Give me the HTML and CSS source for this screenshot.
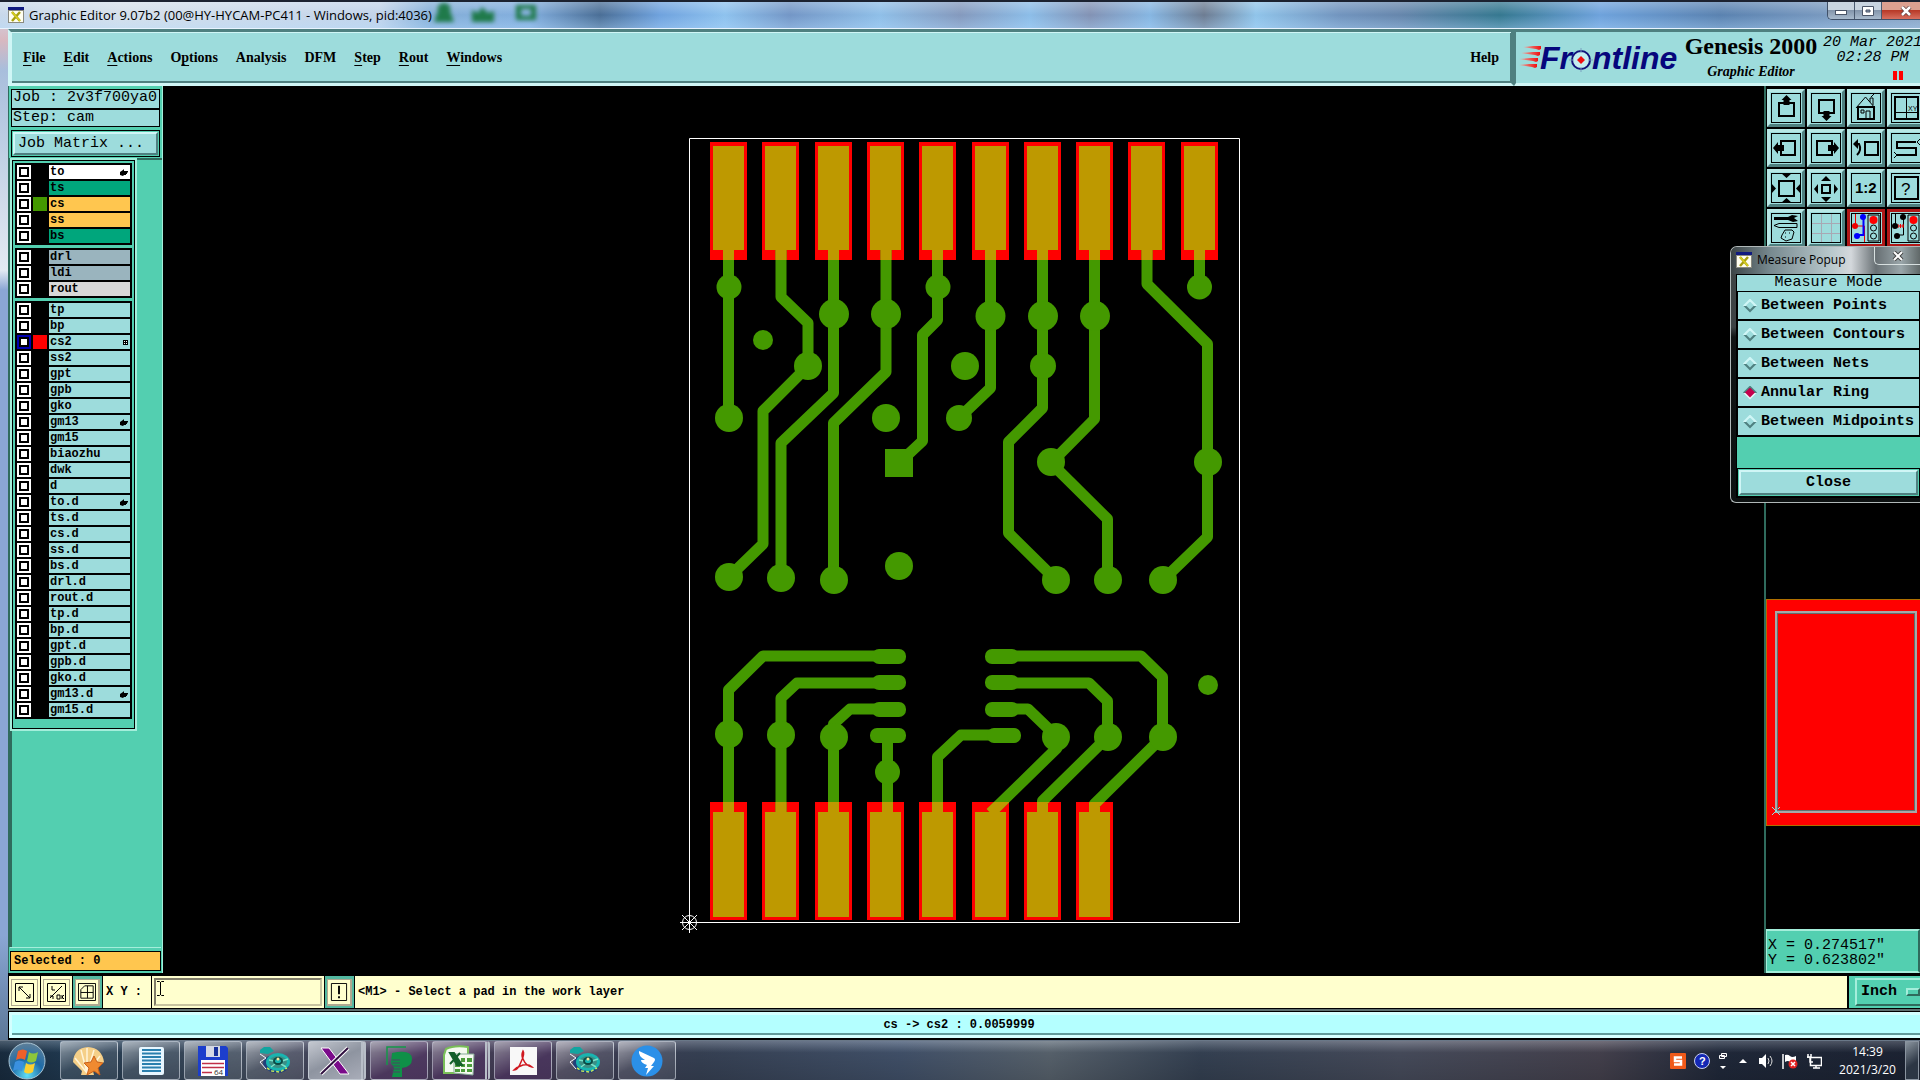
FILE: index.html
```html
<!DOCTYPE html>
<html lang="en">
<head>
<meta charset="utf-8">
<title>Graphic Editor 9.07b2</title>
<link rel="stylesheet" href="styles.css">
</head>
<body>
<svg class="defs" aria-hidden="true">
  <symbol id="xicon" viewBox="0 0 16 16"><rect width="16" height="16" fill="#8a8a80"/><rect x="1" y="4" width="14" height="11" fill="#fffef0"/><rect width="16" height="3" fill="#101a80"/><path d="M4 5l8 9M12 5l-8 9" stroke="#a8a010" stroke-width="2.5"/><path d="M4 5l8 9" stroke="#d8d020" stroke-width="1.5"/></symbol>
  <symbol id="hand" viewBox="0 0 8 7"><path d="M0 3l3-2 1-1v2h4v1.500H7V5H6v1H4L3 7 0 6z"/></symbol>
  <symbol id="reel" viewBox="0 0 32 32"><ellipse cx="17" cy="19" rx="13" ry="9" fill="#223f7a" transform="rotate(8 17 19)"/><ellipse cx="19" cy="17" rx="12" ry="9" fill="#18b5b0"/><ellipse cx="19" cy="17" rx="9" ry="6" fill="#3b8f86"/><path d="M10 15l5 1M12 22l4-3M27 22l-5-3M29 14l-6 2" stroke="#7be0c8" stroke-width="1.500"/><ellipse cx="19" cy="16" rx="5" ry="4" fill="#0b4a44"/><ellipse cx="19" cy="16" rx="3" ry="2" fill="#18b5b0"/><circle cx="19" cy="14" r="1.500" fill="#ffe9a0"/><path d="M1 5l4-3h6l4 4-6 3-8-1z" fill="#12a5a0"/><path d="M1 9l6 4-6 4 6 7" stroke="#f4f8ff" fill="none"/><path d="M8 23l5 3 8 1 7-4" stroke="#c4e85a" stroke-width="1.500" stroke-dasharray="3 2" fill="none"/></symbol>
</svg>

<div class="window">
  <header class="titlebar">
    <svg class="app-icon"><use href="#xicon"/></svg>
    <h1 class="window-title">Graphic Editor 9.07b2 (00@HY-HYCAM-PC411 - Windows, pid:4036)</h1>
    <svg class="ghost" viewBox="0 0 110 26" aria-hidden="true"><g fill="#1f7a4a"><path d="M12 1a6 6 0 016 8l4 11H2l4-11a6 6 0 016-8z"/><path d="M40 20V8l6 3 4-6 6 6 6-2v11z"/><path d="M84 3h20v15H84zM89 7v7h10V7z" fill-rule="evenodd"/></g></svg>
    <div class="caption-buttons">
      <button class="cap" aria-label="Minimize"><svg viewBox="0 0 12 10"><rect x="0.500" y="4.500" width="11" height="4" fill="#fff" stroke="#4a5568"/></svg></button>
      <button class="cap" aria-label="Maximize"><svg viewBox="0 0 12 10"><path d="M.5.5h11v9H.5zM4 4v2h4V4z" fill="#fff" stroke="#4a5568" fill-rule="evenodd"/></svg></button>
      <button class="cap cap-close" aria-label="Close window"><svg viewBox="0 0 12 10"><path d="M2 1l8 8M10 1L2 9" stroke="#5c3a3a" stroke-width="4"/><path d="M2 1l8 8M10 1L2 9" stroke="#fff" stroke-width="2.500"/></svg></button>
    </div>
  </header>

  <div class="topbar">
    <nav class="menubar">
      <button><u>F</u>ile</button><button><u>E</u>dit</button><button><u>A</u>ctions</button><button>O<u>p</u>tions</button><button>Analysis</button><button>DFM</button><button><u>S</u>tep</button><button><u>R</u>out</button><button><u>W</u>indows</button>
      <button class="help">Help</button>
    </nav>
    <div class="brand">
      <svg class="logo" viewBox="0 0 164 40" role="img" aria-label="Frontline">
        <defs><linearGradient id="sp"><stop offset="0" stop-color="#e8b0a8"/><stop offset="1" stop-color="#f01010"/></linearGradient></defs>
        <g fill="url(#sp)"><path d="M4 9l10-1h8v3l-2 1-3-1z"/><path d="M2 15l12-1h7v3l-2 1-3-1z"/><path d="M0 21l12-1h7v3l-2 1-3-1z"/><path d="M0 27l10-1h8v3l-2 1-3-1z"/></g>
        <text class="logo-text" x="21" y="31">Fr</text>
        <circle cx="62" cy="22" r="9" fill="#c4eef0" stroke="#12127a" stroke-width="2"/><path d="M62 18l4 4-4 4-4-4z" fill="#f01010"/><path d="M62 10v5M62 29v5M50 22h5M69 22h5" stroke="#7b9fc0"/>
        <text class="logo-text" x="73" y="31">ntline</text>
      </svg>
      <div class="product"><strong>Genesis 2000</strong><em>Graphic Editor</em></div>
      <div class="clock"><span>20 Mar 2021</span><span>02:28 PM</span><i class="pause"></i></div>
    </div>
  </div>

  <main class="workspace">
    <aside class="sidebar">
      <div class="job">
        <div>Job : 2v3f700ya0</div>
        <div>Step: cam</div>
      </div>
      <div class="matrix"><button>Job Matrix ...</button></div>
      <div class="layers">
        <div class="layer-frame" id="layers"></div>
      </div>
      <div class="selected"><span>Selected : 0</span></div>
    </aside>

    <section class="canvas">
      <svg viewBox="163 86 1601 889" role="img" aria-label="Board artwork">
        <defs>
          <g id="copper">
            <g class="trace">
              <path d="M728.500 250V418"/>
              <path d="M781 250V297L808 323V366L763 411V544L729 577"/>
              <path d="M833.500 250V393L781 443V578"/>
              <path d="M886 250V372L833.500 423V580"/>
              <path d="M937.500 250V320L922.500 335V441L899 463"/>
              <path d="M990.500 250V388L959 418"/>
              <path d="M1042.500 250V408L1008.500 442V533L1056 580"/>
              <path d="M1094.500 250V419L1051 463L1107.500 519V580"/>
              <path d="M1147 250V284L1207.500 344V537L1163 580"/>
              <path d="M1199.500 250V287"/>
              <path d="M728.500 812V690L763 656H880"/>
              <path d="M781 812V698L797 683H880"/>
              <path d="M833.500 812V724L850 709H880"/>
              <path d="M887.500 812V735"/>
              <path d="M937.500 812V757L961 735H995"/>
              <path d="M1010 709H1028L1057 737V748L990.500 813"/>
              <path d="M1010 683H1089L1107.500 701V737L1042.500 801V813"/>
              <path d="M1010 656H1141L1162.500 677V737L1094.500 804V813"/>
            </g>
            <circle cx="729" cy="287" r="12.500"/><circle cx="729" cy="418" r="14"/><circle cx="763" cy="340" r="10"/><circle cx="808" cy="366" r="14"/><circle cx="729" cy="577" r="14"/><circle cx="781" cy="578" r="14"/><circle cx="834" cy="314" r="15"/><circle cx="834" cy="580" r="14"/><circle cx="886" cy="314" r="15"/><circle cx="886" cy="418" r="14"/><circle cx="938" cy="287" r="12.500"/><circle cx="965" cy="366" r="14"/><circle cx="959" cy="418" r="13"/><circle cx="990.500" cy="316" r="15"/><circle cx="1043" cy="316" r="15"/><circle cx="1043" cy="366" r="13"/><circle cx="1095" cy="316" r="15"/><circle cx="1051" cy="462" r="14"/><circle cx="1056" cy="580" r="14"/><circle cx="1108" cy="580" r="14"/><circle cx="1163" cy="580" r="14"/><circle cx="1208" cy="462" r="14"/><circle cx="1199.500" cy="287" r="12.500"/><circle cx="899" cy="566" r="14"/><circle cx="1208" cy="685" r="10"/>
            <circle cx="729" cy="734" r="14"/><circle cx="781" cy="735" r="14"/><circle cx="834" cy="737" r="14"/><circle cx="887.500" cy="772" r="12.500"/><circle cx="1056" cy="737" r="14"/><circle cx="1108" cy="737" r="14"/><circle cx="1163" cy="737" r="14"/>
            <rect x="885" y="449" width="28" height="28"/>
            <g id="pills"></g>
          </g>
          <clipPath id="padclip"></clipPath>
        </defs>
        <path d="M689.500 138.500H1239.500V922.500H689.500z" fill="none" stroke="#fff"/>
        <g id="pads" fill="#ff0000"></g>
        <use href="#copper" fill="#449900" stroke="#449900"/>
        <g clip-path="url(#padclip)"><use href="#copper" fill="#be9900" stroke="#be9900"/></g>
        <g id="fingers" fill="#be9900"></g>
        <path d="M680 922.500H700M689.500 912V933M682 915l15 15M697 915l-15 15" stroke="#fff"/><circle cx="689.500" cy="922.500" r="7" fill="none" stroke="#fff"/>
      </svg>
    </section>

    <aside class="tools">
      <div class="toolgrid">
        <button class="tool" aria-label="Pan up"><svg viewBox="0 0 30 30"><path class="s2" d="M8 10h15v13H8z"/><path d="M15.500 2l5 5h-2v5h-6V7h-2z"/></svg></button>
        <button class="tool" aria-label="Pan down"><svg viewBox="0 0 30 30"><path class="s2" d="M8 7h15v13H8z"/><path d="M15.500 28l5-5h-2v-5h-6v5h-2z"/></svg></button>
        <button class="tool" aria-label="Home"><svg viewBox="0 0 30 30"><path class="s1" d="M5 15L14.500 4 24 15M19 9V5h3v7M20 4l3-3M10 17h3v3h-3zM15 26v-8h4v8z"/><path class="s2" d="M7 14v12h16V14z"/></svg></button>
        <button class="tool" aria-label="Zoom to XY"><svg viewBox="0 0 30 30"><path class="s2" d="M4 4h23v22H4z"/><path class="s1" d="M15.500 4v22M4 19.500h23"/><text x="17" y="18" font-size="7">XY</text></svg></button>
        <button class="tool" aria-label="Pan left"><svg viewBox="0 0 30 30"><path class="s2" d="M10 8h14v14H10z"/><path d="M2 15l5-6v3h6v6H7v3z"/></svg></button>
        <button class="tool" aria-label="Pan right"><svg viewBox="0 0 30 30"><path class="s2" d="M6 8h15v14H6z"/><path d="M28 15l-5-6v3h-6v6h6v3z"/></svg></button>
        <button class="tool" aria-label="Previous view"><svg viewBox="0 0 30 30"><path class="s2" d="M14 9h13v13H14zM4 11h4q3 6-2 11"/><path d="M2 11l5-5v10z"/></svg></button>
        <button class="tool" aria-label="Snake"><svg viewBox="0 0 30 30"><path class="s2" d="M25 9H6v6h19v7H6"/><path class="s1" d="M29 6l-3 3 3 3M3 19l3 3-3 3"/></svg></button>
        <button class="tool" aria-label="Zoom in"><svg viewBox="0 0 30 30"><path class="s2" d="M8 8h15v15H8z"/><path d="M10 0h11l-5.500 5zM10 30h11l-5.500-5zM0 10v11l5-5.500zM30 10v11l-5-5.500z"/></svg></button>
        <button class="tool" aria-label="Zoom out"><svg viewBox="0 0 30 30"><path class="s2" d="M11 12h8v8h-8z"/><path d="M10 8h10l-5-5zM10 24h10l-5 5zM7 11v10l-4-5zM23 11v10l4-5z"/></svg></button>
        <button class="tool" aria-label="Scale 1:2"><svg viewBox="0 0 30 30"><text x="4" y="20" font-size="15" font-weight="bold">1:2</text></svg></button>
        <button class="tool" aria-label="Query"><svg viewBox="0 0 30 30"><path class="s2" d="M4 4h23v22H4z"/><text x="10" y="22" font-size="17">?</text></svg></button>
        <button class="tool" aria-label="Settings"><svg viewBox="0 0 30 30"><path d="M3 4h14v3H3zM17 4l4-2 6 1-4 2 4 3-5 1-5-2z"/><path class="s1" d="M3 12.500l5-2h18v4H8zM11 22l3-5h7l2 2-2 7-6 2-5-3zM14 20h1M18 20h1M14 24h1"/></svg></button>
        <button class="tool" aria-label="Grid"><svg viewBox="0 0 30 30"><path d="M10.500 0v30M20.500 0v30M0 10.500h30M0 20.500h30" stroke="#a8a8b4"/></svg></button>
        <button class="tool tool-red" aria-label="Snap to nets"><svg viewBox="0 0 30 30"><path d="M4.500 0v13h9v17" stroke="#e00" fill="none"/><path d="M12.500 4v18H7" stroke="#00f" stroke-width="2" fill="none"/><circle cx="4" cy="13" r="3" fill="#e00"/><circle cx="12" cy="4" r="3" fill="#00f"/><circle cx="6" cy="23" r="3" fill="#00f"/><path class="s1" d="M17 2h11v26H17z"/><circle cx="22.500" cy="7" r="4" fill="#f00"/><circle class="s1" cx="22.500" cy="15" r="3"/><circle class="s1" cx="22.500" cy="23" r="3"/></svg></button>
        <button class="tool tool-red" aria-label="Snap to features"><svg viewBox="0 0 30 30"><path class="s1" d="M4.500 0v13M12.500 4v18H7"/><path d="M7 11v4M9.500 11v4M7 13h6M12 11v4" stroke="#e00"/><circle cx="4" cy="13" r="3"/><circle cx="12" cy="4" r="3"/><circle cx="6" cy="23" r="3"/><path class="s1" d="M17 2h11v26H17z"/><circle cx="22.500" cy="7" r="4" fill="#f00"/><circle class="s1" cx="22.500" cy="15" r="3"/><circle class="s1" cx="22.500" cy="23" r="3"/></svg></button>
      </div>
      <div class="overview"><div class="overview-frame"><svg viewBox="0 0 8 8"><path d="M0 0l8 8M8 0L0 8" stroke="#8fe0e0"/></svg></div></div>
      <div class="coords"><div>X = 0.274517"</div><div>Y = 0.623802"</div></div>
    </aside>
  </main>

  <div class="command">
    <button class="cbtn" aria-label="Measure"><svg viewBox="0 0 19 19"><path d="M.5.5h18v18H.5zM4 4l11 11M4 8V4h4M15 11v4h-4"/></svg></button>
    <button class="cbtn" aria-label="Snap mode"><svg viewBox="0 0 19 19"><path d="M.5.5h18v18H.5zM3 15L15 3M5 3v4h3M3 13h3v3M10 12h3v4h-3zM15 12v4M17 12l-2 2 2 2"/></svg></button>
    <button class="cbtn on" aria-label="Grid mode"><svg viewBox="0 0 19 19"><path d="M.5.5h18v18H.5zM7 3h9v13H3V7zM10 3v13M3 10h13"/></svg></button>
    <label for="xy">X Y :</label>
    <div class="xy-box"><input id="xy" type="text"><svg class="ibeam" viewBox="0 0 7 15"><path d="M0 .5h2.500l1 1 1-1H7M0 14.500h2.500l1-1 1 1H7M3.500 1v13" fill="none" stroke="#000"/></svg></div>
    <button class="cbtn on bang" aria-label="Alert"><svg viewBox="0 0 19 19"><path d="M1.500.5h16v18h-16z"/><path class="s2" d="M9.500 3v9M9.500 14v2"/></svg></button>
    <output class="message">&lt;M1&gt; - Select a pad in the work layer</output>
    <div class="units"><select aria-label="Units"><option>Inch</option></select><i></i></div>
  </div>
  <div class="status"><div>cs -&gt; cs2 : 0.0059999</div></div>

  <section class="popup" aria-label="Measure Popup">
    <div class="popup-title"><svg class="app-icon"><use href="#xicon"/></svg><h2>Measure Popup</h2><button aria-label="Close popup"><svg viewBox="0 0 12 10"><path d="M2 1l8 8M10 1L2 9" stroke="#444" stroke-width="4"/><path d="M2 1l8 8M10 1L2 9" stroke="#fff" stroke-width="2"/></svg></button></div>
    <div class="popup-body">
      <h3>Measure Mode</h3>
      <label><input type="radio" name="mode">Between Points</label>
      <label><input type="radio" name="mode">Between Contours</label>
      <label><input type="radio" name="mode">Between Nets</label>
      <label><input type="radio" name="mode" checked>Annular Ring</label>
      <label><input type="radio" name="mode">Between Midpoints</label>
      <div class="popup-foot"><button>Close</button></div>
    </div>
  </section>
</div>

<footer class="taskbar">
  <button class="start" aria-label="Start"><svg viewBox="0 0 38 38"><defs><radialGradient id="orb" cx=".5" cy=".9" r=".9"><stop offset="0" stop-color="#5fe0f8"/><stop offset=".5" stop-color="#1d6ba8"/><stop offset="1" stop-color="#5f7f98"/></radialGradient></defs><circle cx="19" cy="19" r="18" fill="url(#orb)" stroke="#a8c4d4"/><path d="M10 9q5-3 9 0l-2 9q-4-3-9 0z" fill="#f0602a"/><path d="M21 10q4 3 9 0l-2 9q-5 3-9 0z" fill="#8ec63a"/><path d="M7 20q4-3 9 0l-2 9q-5-3-9 0z" fill="#3a90e0"/><path d="M18 21q4 3 9 0l-2 9q-5 3-9 0z" fill="#fcd030"/></svg></button>
  <div class="tasks">
    <button class="task" aria-label="Shell"><svg viewBox="0 0 32 32"><path d="M15 2Q1 3 0 17l9 9-1 4h13l-1-4 11-9Q29 3 15 2z" fill="#f5cf88"/><path d="M14 28L2 13M14 28L8 5M14 28V3M14 28l7-23M14 28l13-17" stroke="#fff4d8" stroke-width="1.500"/><path d="M21 11l3 6 6 1-5 5 2 7-6-4-7 4 2-7-5-5 7-1z" fill="#f08a30" stroke="#c8601a"/></svg></button>
    <button class="task" aria-label="Notes"><svg viewBox="0 0 32 32"><rect x="4" y="2" width="25" height="28" rx="2" fill="#e8f6ff"/><path d="M7 5h19M7 8.500h19M7 12h19M7 15.500h19M7 19h19M7 22.500h19M7 26h19" stroke="#2a7fae" stroke-width="2"/></svg></button>
    <button class="task" aria-label="Total Commander"><svg viewBox="0 0 32 32"><path d="M1 1h28l2 2v28H1z" fill="#1c3ecc"/><rect x="9" y="1" width="14" height="11" fill="#d4d8e4"/><rect x="17" y="2" width="4" height="9" fill="#16309a"/><rect x="4" y="15" width="24" height="16" fill="#fff"/><path d="M5 18.500h22M5 22.500h22M5 27.500h10" stroke="#c03048" stroke-width="1.500"/><text x="17" y="30" font-size="8" fill="#333">64</text></svg></button>
    <button class="task" aria-label="Reel"><svg><use href="#reel"/></svg></button>
    <button class="task active stack" aria-label="Exceed"><svg viewBox="0 0 32 32"><path d="M2 3h8l20 26h-9z" fill="#7a0a8a" stroke="#fff"/><path d="M29 3L2 29" stroke="#fff" stroke-width="4"/><path d="M29 3L2 29" stroke="#301040" stroke-width="2"/></svg></button>
    <button class="task tint" aria-label="P"><svg viewBox="0 0 32 32"><path d="M4 20V2h19" stroke="#14984a" fill="none" stroke-width="1.500"/><path d="M9 8q20-4 20 6 0 8-10 9v9H9l2-9-3-5z" fill="#0f9048"/><path d="M9 15h8M9 18h8M9 21h8M9 24h8M9 27h8" stroke="#4d4565"/></svg></button>
    <button class="task tint stack" aria-label="Excel"><svg viewBox="0 0 32 32"><path d="M3 4q8-4 22-2v26H1V10z" fill="#f4faf0" stroke="#7abf58" stroke-width="2"/><path d="M11 9h20l-1 21-19-2z" fill="#f4faf0" stroke="#8a9"/><path d="M18 13h4v4h-4zM24 13h5v4h-5zM12 19h5v3h-5zM18 19h4v3h-4zM24 19h5v3h-5zM12 24h5v3h-5zM18 24h4v3h-4zM24 24h5v3h-5z" fill="#4b9b3a"/><path d="M7 8h4l8 12h-5zM17 8L7 19" stroke="#14602a" stroke-width="2" fill="#14602a"/></svg></button>
    <button class="task tint" aria-label="PDF"><svg viewBox="0 0 32 32"><rect x="3" y="2" width="27" height="28" fill="#f8f8f8"/><path d="M16 6q-2 4 0 8 3 7 9 8-3-3-9-2-6 2-9 5 4 0 7-8 4-8 2-11z" stroke="#d01820" fill="none" stroke-width="1.500"/></svg></button>
    <button class="task" aria-label="Reel 2"><svg><use href="#reel"/></svg></button>
    <button class="task" aria-label="DingTalk"><svg viewBox="0 0 32 32"><circle cx="16" cy="16" r="15.500" fill="#2b90e8"/><path d="M8 6l15 7q2 1 0 4l-3 4h3l-8 9 2-7h-3l2-3q-6-2-6-5l4 0q-7-4-6-9z" fill="#fff"/></svg></button>
  </div>
  <div class="tray">
    <svg class="big" viewBox="0 0 16 16"><rect width="16" height="16" rx="1" fill="#f05a1a"/><path d="M12 4.500H5v3.500h6v3.500H4" stroke="#fff" stroke-width="2.500" fill="none"/></svg>
    <svg class="big" viewBox="0 0 16 16"><circle cx="8" cy="8" r="7.500" fill="#1428b4" stroke="#c8d0f0"/><text x="5" y="12" font-size="11" font-weight="bold" fill="#fff">?</text></svg>
    <svg class="tall" viewBox="0 0 10 18"><path d="M3.500 1.500h5v3h-5zM1.500 3.500h5v3h-5z" fill="#334" stroke="#fff"/><path d="M2 14h6l-3 3z" fill="#fff"/></svg>
    <svg viewBox="0 0 14 14"><path d="M3 9h8L7 5z" fill="#fff"/></svg>
    <svg class="big" viewBox="0 0 16 16"><path d="M1 5h3l4-4v14l-4-4H1z" fill="#fff"/><path d="M10 5q2 3 0 6M12 3q4 5 0 10" stroke="#ddd" fill="none"/></svg>
    <svg class="big" viewBox="0 0 16 16"><path d="M1 1v15" stroke="#fff" stroke-width="1.500"/><path d="M3 2q3-1 5 1t6 0v6q-4 2-6 0T3 9z" fill="#fff"/><circle cx="11" cy="11" r="4.500" fill="#e02020"/><path d="M9 9l4 4M13 9l-4 4" stroke="#fff" stroke-width="1.500"/></svg>
    <svg class="big" viewBox="0 0 16 16"><path d="M4.500 4.500h11v8h-11zM7 15h7M10 12v3M2 1v4M5 1v3M1 4h3v5h3" stroke="#fff" fill="none" stroke-width="1.500"/></svg>
    <time><span>14:39</span><span>2021/3/20</span></time>
  </div>
  <button class="desk" aria-label="Show desktop"></button>
</footer>
<script src="app.js"></script>
</body>
</html>
```
FILE: styles.css
```css
:root {
  --face: #9ddcdc;
  --hi: #d0f6f6;
  --lo: #4f8080;
  --teal: #53cfb0;
  --teal-hi: #a4eedb;
  --teal-lo: #2f6b5d;
  --cream: #ffffce;
  --mono: "Liberation Mono", "DejaVu Sans Mono", monospace;
  --serif: "Liberation Serif", serif;
  --ui: "Open Sans", "Noto Sans", sans-serif;
}
* { box-sizing: border-box; }
body { margin: 0; height: 100vh; display: flex; flex-direction: column; overflow: hidden; background: #000; color: #000; font-family: var(--mono); }
button, input, select { font: inherit; color: inherit; margin: 0; border-radius: 0; }
button { padding: 0; border: 0; background: none; }
h1, h2, h3 { margin: 0; font-weight: normal; }
svg { display: block; }
.defs { position: absolute; width: 0; height: 0; }

.window { flex: 1; min-height: 0; display: flex; flex-direction: column; padding-left: 8px; position: relative; background: linear-gradient(#cddff2 0, #d8b8c0 40px, #a8bedc 70px, #e4eaf2 270px, #8aa6d4 290px, #8aa6d4 90%, #5c7898); }

/* title bar */
.titlebar { height: 29px; flex: none; margin-left: -8px; padding: 0 0 0 8px; display: flex; align-items: center; border-top: 2px solid #1c2230; border-bottom: 1px solid #e8f4ff;
  background: linear-gradient(rgba(255,255,255,.25), rgba(255,255,255,0) 50%, rgba(180,220,255,.35)),
  linear-gradient(90deg, #c8d8ea 0, #d6e0ea 120px, #c2d4ea 380px, #85afd8 430px, #82aede 530px, #4a6e96 600px, #6fa2de 660px, #8ec2ee 725px, #7396c6 790px, #8fbfe8 880px, #8499bd 960px, #8cbde8 1030px, #8292b4 1090px, #86b6e2 1150px, #6d7c92 1204px, #90c4ea 1256px, #7194be 1340px, #6686ac 1400px, #357890 1500px, #6ea2dc 1600px, #5a82b0 1720px, #7a9ac0 1830px, #8aa4c4); }
.app-icon { width: 16px; height: 16px; flex: none; }
.window-title { margin-left: 5px; font: 13px/20px var(--ui); white-space: nowrap; }
.ghost { width: 110px; height: 26px; filter: blur(2px); }
.caption-buttons { display: flex; flex: none; align-self: flex-start; margin-left: auto; border: 1px solid #3f5068; border-width: 0 0 1px 1px; border-radius: 0 0 0 5px; margin-right: -10px; overflow: hidden; }
.cap { width: 27px; height: 17px; display: grid; place-items: center; border-right: 1px solid #4a5a70; background: linear-gradient(#c8d4e0 45%, #8496ac 50%, #a8bacd); }
.cap svg { width: 12px; height: 10px; }
.cap-close { width: 48px; border: 0; background: linear-gradient(#dca090 45%, #b83a28 50%, #d87060); }

/* menu and brand */
.topbar { display: flex; flex: none; height: 57px; background: var(--teal-hi); }
.menubar { flex: 1; display: flex; align-items: center; gap: 18px; padding: 0 12px; background: var(--face); border: 3px solid; border-color: var(--lo) var(--lo) var(--hi) var(--hi); box-shadow: inset 1px 1px var(--hi), inset -1px -2px var(--lo); font: bold 14px/20px var(--serif); }
.menubar button { white-space: nowrap; }
.menubar u { text-underline-offset: 3px; }
.menubar .help { margin-left: auto; }
.brand { width: 406px; flex: none; display: flex; overflow: hidden; background: var(--face); border: solid; border-width: 3px 0 3px 2px; border-color: var(--lo) var(--lo) var(--hi) var(--lo); }
.logo { width: 164px; height: 40px; margin: 6px 0 0 3px; flex: none; }
.logo-text { font: italic bold 32px "Liberation Sans", sans-serif; fill: #06067c; }
.product { display: flex; flex-direction: column; align-items: center; flex: none; width: 136px; font-family: var(--serif); white-space: nowrap; }
.product strong { font-size: 24px; line-height: 28px; }
.product em { font-size: 14px; line-height: 24px; font-weight: bold; }
.clock { display: flex; flex-direction: column; flex: none; align-items: center; padding-left: 4px; padding-top: 3px; font: italic bold 15px/15px var(--mono); font-weight: normal; white-space: nowrap; }
.pause { width: 10px; height: 9px; margin: 6px 0 0 50px; border: solid red; border-width: 0 4px; }

/* workspace */
.workspace { flex: 1; min-height: 0; display: flex; background: #000; }
.sidebar { width: 155px; flex: none; display: flex; flex-direction: column; margin-bottom: 2px; background: var(--teal); border-right: 1px solid var(--teal-hi); border-left: 1px solid var(--teal-lo); font-size: 15px; white-space: nowrap; }
.job { margin: 3px 2px; border: 1px solid #000; background: var(--face); }
.job div { height: 18px; line-height: 16px; padding-left: 1px; }
.job div + div { border-top: 2px solid #000; }
.matrix { margin: 0 2px 1px; padding: 1px; border: 1px solid #000; }
.matrix button { display: block; width: 100%; height: 23px; text-align: left; padding-left: 3px; background: var(--face); border: 2px solid; border-color: var(--hi) var(--lo) var(--lo) var(--hi); }
.layers { flex: 1; border-top: 2px solid var(--teal-lo); border-left: 3px solid var(--teal-lo); min-height: 0; }
.layer-frame { width: 123px; padding: 2px 2px 9px; display: flex; flex-direction: column; gap: 3px; border: 1px solid #000; outline: 2px solid var(--teal-hi); outline-offset: 0; }
.layer-group { background: #000; padding: 2px 2px 0; }
.layer { display: flex; gap: 2px; height: 14px; margin-bottom: 2px; font: bold 12px/14px var(--mono); }
.layer input { appearance: none; width: 14px; height: 14px; flex: none; background: #fff; border: 2px solid #fff; display: grid; }
.layer input::before { content: ""; border: 2px solid #000; }
.layer input:checked { border-color: #0000b0; }
.swatch { width: 14px; flex: none; background: #000; }
.layer label { flex: 1; display: flex; align-items: center; justify-content: space-between; padding: 0 2px 0 1px; height: 14px; background: var(--face); }
.layer svg { width: 8px; height: 7px; }
.layer .mark { width: 5px; height: 5px; border: 1px solid #000; background: #000; outline: 1px dotted #fff; outline-offset: -2px; }
.selected { margin: 0 1px 2px; padding: 3px 0 0; border-top: 1px solid var(--teal-hi); font: bold 12px/18px var(--mono); }
.selected span { display: block; padding-left: 3px; background: #ffc64f; border: 1px solid #000; }

.canvas { flex: 1; min-width: 0; }
.canvas svg { width: 100%; height: 100%; }
.trace { fill: none; stroke-width: 11; stroke-linejoin: round; }
#copper circle, #copper rect { stroke: none; }

.tools { width: 156px; flex: none; display: flex; flex-direction: column; overflow: hidden; border-left: 2px solid var(--teal-lo); margin-bottom: 2px; }
.toolgrid { display: grid; grid-template-columns: repeat(4, 38px); gap: 2px; padding: 3px 1px; background: #000; }
.tool { width: 38px; height: 38px; padding: 1px; background: var(--face); border: 3px solid; border-color: #b8e8e6 var(--lo) var(--lo) #b8e8e6; }
.tool svg { width: 30px; height: 30px; outline: 1px solid #000; outline-offset: -1px; font-family: "Liberation Sans", sans-serif; }
.tool-red { border-color: #b01818; }
.s1 { fill: none; stroke: #000; }
.s2 { fill: none; stroke: #000; stroke-width: 2; }
.overview { margin-top: auto; height: 227px; padding: 11px 3px 12px 8px; background: red; border: 1px solid #b07000; border-right: 0; }
.overview-frame { height: 100%; display: flex; align-items: flex-end; border: 2px solid #a8a8a8; outline: 1px solid #607070; outline-offset: -3px; }
.overview-frame svg { width: 8px; height: 8px; margin: 0 0 -4px -5px; }
.coords { margin-top: 103px; height: 44px; padding: 7px 0 0 1px; background: var(--teal); border: solid; border-width: 2px 2px 2px 1px; border-color: var(--teal-hi) var(--teal-lo) var(--teal-hi) var(--teal-hi); font-size: 15px; line-height: 15px; white-space: nowrap; }

/* command line */
.command { height: 34px; flex: none; display: flex; padding: 1px 0 1px 1px; background: #000; font: bold 12px/32px var(--mono); }
.cbtn { width: 31px; margin-right: 1px; padding: 2px; background: var(--cream); }
.cbtn svg { width: 27px; height: 27px; padding: 3px; border: 1px solid #b0a890; fill: none; stroke: #000; }
.cbtn.on { background: #53b8a0; width: 29px; padding: 2px; }
.cbtn.on svg { width: 25px; height: 27px; padding: 3px 2px; background: var(--cream); border-width: 1px 2px 2px 1px; }
.command label { width: 48px; padding-left: 3px; background: var(--cream); white-space: nowrap; }
.xy-box { width: 172px; margin-left: 1px; padding: 2px; background: var(--cream); position: relative; }
.xy-box input { display: block; width: 100%; height: 28px; padding: 0 10px; background: var(--cream); border: 2px solid; border-color: #807c68 #c8c4a0 #c8c4a0 #807c68; outline: 0; }
.ibeam { position: absolute; left: 5px; top: 5px; width: 7px; height: 15px; }
.bang { margin-left: 1px; }
.message { flex: 1; padding-left: 3px; background: var(--cream); white-space: nowrap; }
.units { width: 71px; margin-left: 2px; padding: 2px 0 2px 6px; background: var(--teal); display: flex; position: relative; }
.units select { appearance: none; width: 100%; height: 28px; padding: 0 0 0 4px; background: var(--teal); border: 2px solid; border-width: 2px 0 2px 2px; border-color: var(--teal-hi) var(--teal-lo) var(--teal-lo) var(--teal-hi); font: bold 15px/20px var(--mono); }
.units i { position: absolute; right: 0; top: 12px; width: 14px; height: 8px; border: 2px solid; border-color: var(--teal-hi) var(--teal-lo) var(--teal-lo) var(--teal-hi); }
.status { height: 31px; flex: none; padding: 1px 0 1px 1px; border-top: 2px solid #607070; background: #000; }
.status div { height: 26px; background: #b4ffff; border: 3px solid #d4ffff; border-right: 0; box-shadow: inset 0 -2px #5f9a9a; padding-right: 14px; text-align: center; font: bold 12px/20px var(--mono); }

/* popup */
.popup { position: absolute; top: 246px; right: 0; width: 190px; padding: 0 0 4px 5px; border: 1px solid #b0b8b8; border-right: 0; border-radius: 7px 0 0 6px; background: linear-gradient(#404444 0, #3c4244 80px, #101414 90px, #0c1010); font: bold 15px/20px var(--mono); white-space: nowrap; overflow: hidden; }
.popup-title { display: flex; align-items: center; height: 27px; margin-left: -5px; padding: 0 0 2px 5px; background: linear-gradient(90deg, #3c4446 0, #788a90 40px, #b8c8cc 100px, #d4d8dc 120px, #687074 145px, #9aa6aa 170px, #606868); }
.popup-title h2 { flex: 1; margin-left: 5px; font: 12px/20px var(--ui); }
.popup-title button { width: 46px; height: 18px; align-self: flex-start; display: grid; place-items: center; border: 1px solid #d8e0e0; border-top: 0; border-right: 0; border-radius: 0 0 0 5px; }
.popup-title button svg { width: 12px; height: 10px; }
.popup-body { display: flex; flex-direction: column; background: #000; border: 1px solid #000; border-right: 0; }
.popup-body h3 { font-size: 15px; line-height: 16px; text-align: center; background: var(--face); margin-bottom: 1px; }
.popup-body label { display: flex; align-items: center; gap: 4px; height: 27px; margin: 0 1px 2px 1px; padding-left: 5px; background: var(--face); }
.popup-body input { appearance: none; flex: none; width: 14px; height: 14px; display: grid; background: linear-gradient(#d0f6f6 50%, #4f8080 50%); clip-path: polygon(50% 0, 100% 50%, 50% 100%, 0 50%); }
.popup-body input::before { content: ""; margin: 3px; background: var(--face); clip-path: polygon(50% 0, 100% 50%, 50% 100%, 0 50%); }
.popup-body input:checked { background: linear-gradient(#4f8080 50%, #e8f8f8 50%); }
.popup-body input:checked::before { background: #c4004c; margin: 2px; }
.popup-foot { padding: 33px 2px 2px; background: var(--teal); }
.popup-foot button { display: block; width: 100%; height: 25px; background: var(--face); border: 2px solid; border-color: var(--hi) var(--lo) var(--lo) var(--hi); outline: 1px solid #000; outline-offset: 1px; }

/* taskbar */
.taskbar { height: 40px; flex: none; display: flex; border-top: 1px solid #6a7888; color: #fff; font-family: var(--ui);
  background: linear-gradient(rgba(255,255,255,.2), rgba(0,0,0,.15) 30%, rgba(0,0,0,.25)), linear-gradient(90deg, #1c3248 0, #24405a 60px, #4a586c 240px, #544a68 400px, #4a4460 540px, #3e4a60 700px, #4a5c78 900px, #64707c 1050px, #3c4a5e 1200px, #505668 1400px, #4e4a58 1600px, #242e42 1720px, #20283a); }
.start { width: 60px; padding-left: 8px; }
.start svg { width: 38px; height: 38px; }
.tasks { display: flex; gap: 4px; }
.task { width: 58px; height: 39px; display: grid; place-items: center; border: 1px solid rgba(220,228,236,.55); border-radius: 3px; background: linear-gradient(155deg, rgba(255,255,255,.5), rgba(255,255,255,.12) 50%, rgba(255,255,255,.08)); }
.task svg { width: 32px; height: 32px; }
.task.active { background: linear-gradient(155deg, #c4c8d0, #8e94a0 50%, #a8acb8); }
.task.tint { background: linear-gradient(155deg, rgba(255,255,255,.4), rgba(90,50,110,.4) 60%); }
.task.stack { border-right: 5px double #b8bec8; }
.tray { margin-left: auto; display: flex; align-items: center; gap: 8px; }
.tray svg { width: 14px; height: 14px; font-family: "Liberation Sans", sans-serif; }
.tray svg.big { width: 16px; height: 16px; }
.tray svg.tall { width: 10px; height: 18px; }
.tray time { display: flex; flex-direction: column; align-items: center; width: 75px; font-size: 12px; line-height: 18px; }
.desk { width: 14px; height: 39px; border: 1px solid #8a94a0; background: linear-gradient(145deg, #8a949e, #2c3644 60%); margin-right: 1px; }
```
FILE: app.js
```js
// Layer table: groups of [name, background, swatch, flag]
const groups = [
  [['to', '#ffffff', '', 'hand'], ['ts', '#00a67c'], ['cs', '#ffc64f', '#449900'], ['ss', '#ffc64f'], ['bs', '#00a67c']],
  [['drl', '#9ab4be'], ['ldi', '#9ab4be'], ['rout', '#d8d8d8']],
  [['tp'], ['bp'], ['cs2', '', '#ff0000', 'grid'], ['ss2'], ['gpt'], ['gpb'], ['gko'], ['gm13', '', '', 'hand'], ['gm15'],
   ['biaozhu'], ['dwk'], ['d'], ['to.d', '', '', 'hand'], ['ts.d'], ['cs.d'], ['ss.d'], ['bs.d'], ['drl.d'], ['rout.d'],
   ['tp.d'], ['bp.d'], ['gpt.d'], ['gpb.d'], ['gko.d'], ['gm13.d', '', '', 'hand'], ['gm15.d']]
];
const flags = { hand: '<svg><use href="#hand"/></svg>', grid: '<i class="mark"></i>' };
document.getElementById('layers').innerHTML = groups.map(g =>
  '<div class="layer-group">' + g.map(([name, bg, sw, flag]) =>
    `<div class="layer"><input type="checkbox" id="l-${name}"${flag === 'grid' ? ' checked' : ''}>` +
    `<span class="swatch"${sw ? ` style="background:${sw}"` : ''}></span>` +
    `<label for="l-${name}"${bg ? ` style="background:${bg}"` : ''}>${name}${flags[flag] || ''}</label></div>`
  ).join('') + '</div>').join('');

// Edge connector pads: ten along the top, eight along the bottom
const xs = [710, 762, 815, 867, 919, 972, 1024, 1076, 1128, 1181];
const rect = (x, y, w, h, r = 0) => `<rect x="${x}" y="${y}" width="${w}" height="${h}" rx="${r}"/>`;
const pads = xs.map(x => rect(x, 142, 37, 118)).join('') + xs.slice(0, 8).map(x => rect(x, 802, 37, 118)).join('');
document.getElementById('pads').innerHTML = pads;
document.getElementById('padclip').innerHTML = pads;
document.getElementById('fingers').innerHTML =
  xs.map(x => rect(x + 3, 146, 31, 104)).join('') + xs.slice(0, 8).map(x => rect(x + 3, 812, 31, 105)).join('');
document.getElementById('pills').innerHTML =
  [[872, 649], [872, 675], [872, 702], [870, 728], [985, 649], [985, 675], [985, 702], [987, 728]]
    .map(([x, y]) => rect(x, y, x < 900 ? 906 - x : 34, 15, 7)).join('');
```
